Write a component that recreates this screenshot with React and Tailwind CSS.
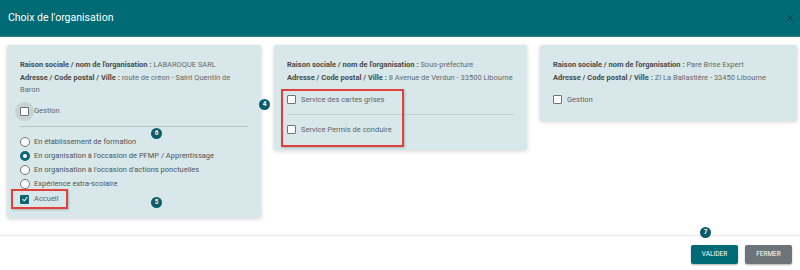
import React from 'react'

const font = { fontFamily: 'Roboto, "Noto Sans", sans-serif' }

const Badge = ({ n, className }) => (
  <span
    className={`absolute flex h-[11px] w-[11px] items-center justify-center rounded-full bg-[#0b5d68] text-[6.5px] font-bold text-white ${className}`}
  >
    {n}
  </span>
)

const Box = ({ checked }) =>
  checked ? (
    <span className="flex h-[9px] w-[9px] shrink-0 items-center justify-center rounded-[1px] bg-[#0e6772]">
      <svg viewBox="0 0 10 10" className="h-[8px] w-[8px]">
        <path d="M2 5.2l2 2 4-4.4" fill="none" stroke="white" strokeWidth="1.3" />
      </svg>
    </span>
  ) : (
    <span className="h-[9px] w-[9px] shrink-0 rounded-[1px] border border-[#6f7476] bg-white" />
  )

const Check = ({ label, checked }) => (
  <div className="flex h-[13px] items-center gap-[5px]">
    <Box checked={checked} />
    <span className="text-[7.5px] text-[#5f6566]">{label}</span>
  </div>
)

const Radio = ({ label, checked }) => (
  <div className="flex h-[14px] items-center gap-[4px]">
    {checked ? (
      <span className="flex h-[10px] w-[10px] shrink-0 items-center justify-center rounded-full bg-[#0e6772]">
        <span className="h-[4px] w-[4px] rounded-full bg-white" />
      </span>
    ) : (
      <span className="h-[10px] w-[10px] shrink-0 rounded-full border border-[#6f7476] bg-white" />
    )}
    <span className="text-[7.5px] text-[#4f5556]">{label}</span>
  </div>
)

const Info = ({ name, address }) => (
  <div className="text-[7.5px] leading-[12.5px] text-[#666b6c]">
    <div>
      <span className="font-bold text-[#474b4c]">Raison sociale / nom de l'organisation :</span> {name}
    </div>
    <div>
      <span className="font-bold text-[#474b4c]">Adresse / Code postal / Ville :</span> {address}
    </div>
  </div>
)

export default function App() {
  return (
    <div className="relative h-[270px] w-[800px] overflow-hidden bg-white" style={font}>
      <div className="flex h-[37px] items-center justify-between border-b border-[#2d7f88] bg-[#006a75] pl-[8px] pr-[6px]">
        <span className="text-[10.5px] text-white">Choix de l'organisation</span>
        <svg viewBox="0 0 10 10" className="h-[8px] w-[8px]">
          <path d="M1 1l8 8M9 1l-8 8" stroke="#0d3f48" strokeWidth="1.2" />
        </svg>
      </div>

      <div className="flex items-start gap-[13px] pl-[7px] pt-[8px]">
        <div className="w-[254px] rounded-[2px] bg-[#d8e7e9] px-[13px] pb-[12px] pt-[14px] shadow-[0_1px_4px_rgba(0,0,0,0.18)]">
          <Info name="LABAROQUE SARL" address="route de créon - Saint Quentin de Baron" />
          <div className="relative mt-[8px]">
            <span className="absolute left-[-5px] top-[-3px] h-[19px] w-[19px] rounded-full bg-[#c6d3d5]" />
            <div className="relative">
              <Check label="Gestion" />
            </div>
          </div>
          <div className="mt-[8px] border-t border-[#b7c6c8]" />
          <div className="mt-[8px]">
            <Radio label="En établissement de formation" />
            <Radio label="En organisation à l'occasion de PFMP / Apprentissage" checked />
            <Radio label="En organisation à l'occasion d'actions ponctuelles" />
            <Radio label="Expérience extra-scolaire" />
          </div>
          <div className="relative mt-[2px]">
            <span className="absolute left-[-9px] top-[-4px] h-[20px] w-[57px] border-2 border-solid border-[#e2403a] shadow-[1px_1px_2px_rgba(0,0,0,0.2)]" />
            <Check label="Accueil" checked />
          </div>
        </div>

        <div className="w-[253px] rounded-[2px] bg-[#d8e7e9] px-[13px] pb-[14px] pt-[14px] shadow-[0_1px_4px_rgba(0,0,0,0.18)]">
          <Info name="Sous-préfecture" address="8 Avenue de Verdun - 33500 Libourne" />
          <div className="relative mt-[9px]">
            <span className="absolute left-[-6px] top-[-4px] h-[58px] w-[123px] border-2 border-solid border-[#e2403a] shadow-[1px_1px_2px_rgba(0,0,0,0.2)]" />
            <Check label="Service des cartes grises" />
            <div className="my-[8px] border-t border-[#c3d0d2]" />
            <Check label="Service Permis de conduire" />
          </div>
        </div>

        <div className="w-[257px] rounded-[2px] bg-[#d8e7e9] px-[13px] pb-[15px] pt-[14px] shadow-[0_1px_4px_rgba(0,0,0,0.18)]">
          <Info name="Pare Brise Expert" address="ZI La Ballastière - 33450 Libourne" />
          <div className="mt-[9px]">
            <Check label="Gestion" />
          </div>
        </div>
      </div>

      <div className="absolute left-0 right-0 top-[235px] border-t border-[#e8e8e8]" />
      <div className="absolute right-[8px] top-[245px] flex gap-[7px]">
        <button className="h-[19px] w-[47px] rounded-[2px] bg-[#006a75] text-[6.5px] text-white shadow-[0_1px_2px_rgba(0,0,0,0.3)]">
          VALIDER
        </button>
        <button className="h-[19px] w-[47px] rounded-[2px] bg-[#6c7479] text-[6.5px] text-white shadow-[0_1px_2px_rgba(0,0,0,0.3)]">
          FERMER
        </button>
      </div>

      <Badge n="4" className="left-[259px] top-[99px]" />
      <Badge n="6" className="left-[151px] top-[128px]" />
      <Badge n="5" className="left-[151px] top-[197px]" />
      <Badge n="7" className="left-[700px] top-[227px]" />
    </div>
  )
}
